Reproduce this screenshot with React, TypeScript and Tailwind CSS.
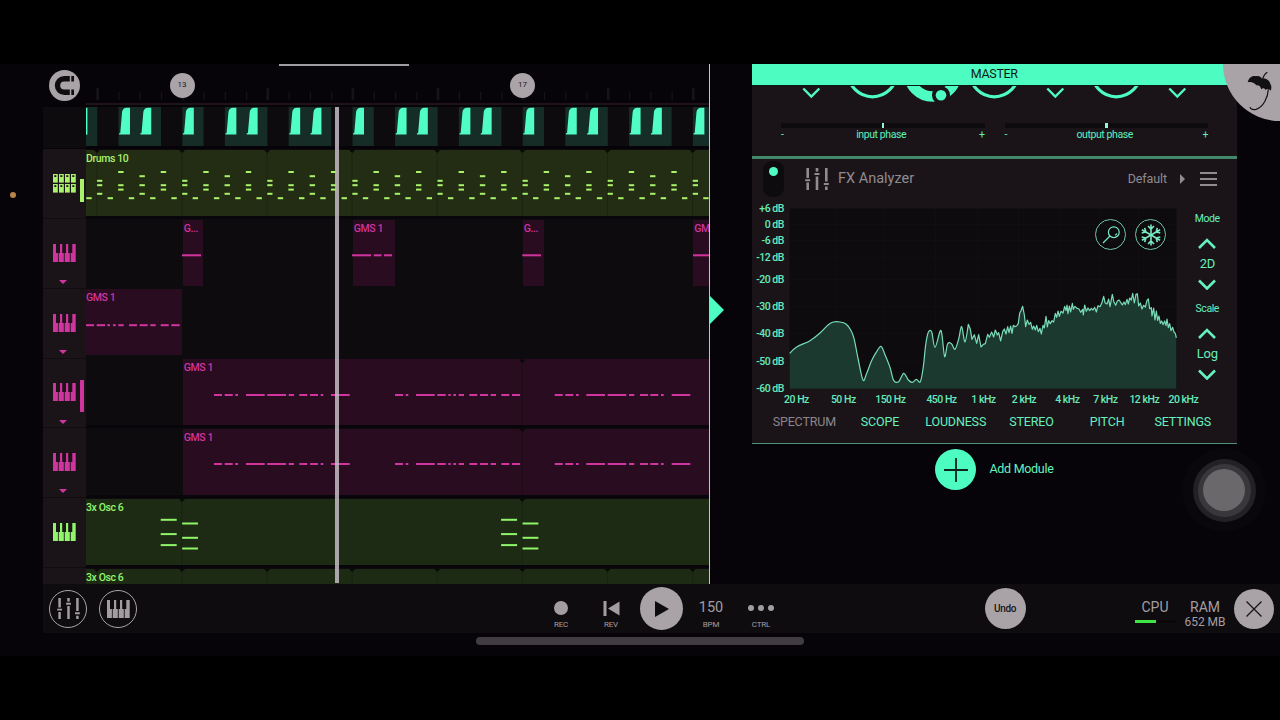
import type { ReactNode } from 'react';

type Note = [x: number, y: number, width: number];

type Clip = {
  left: number;
  width: number;
  label?: string;
};

type Track = {
  id: string;
  icon: 'pads' | 'keys';
  color: string;
  clipColor: string;
  clips: Clip[];
  notes: Note[];
  markers: number[];
  level?: { top: number; height: number };
  arrow?: boolean;
};

const BAR = 85.1;
const BEAT = BAR / 4;
const FIRST_BAR = 10.9;
const LANE_WIDTH = 623;

const PINK = '#d0359f';
const PINK_CLIP = '#290c20';

const bars = [0, 1, 2, 3, 4, 5, 6, 7].map((i) => FIRST_BAR + i * BAR);

// Drum pattern: one list of rows for every beat of the bar
const drumRows = [
  [31.8, 36.2, 44.8],
  [23, 36.2, 40.6],
  [27.2, 36.2, 44.8],
  [23, 36.2, 40.6],
];

const drumNotes: Note[] = [];
for (let i = 0; i < 30; i++) {
  const x = FIRST_BAR + i * BEAT;
  if (i < 29) drumRows[i % 4].forEach((y) => drumNotes.push([x, y, 5.4]));
  drumNotes.push([x - BEAT / 2, 49.2, 5.4]);
}

const line = (y: number, parts: [number, number][]): Note[] =>
  parts.map(([from, to]) => [from - 86, y, to - from]);

const melody = line(36, [
  [214, 222], [224.7, 232.7], [235.3, 238], [246, 264.7], [267.3, 286], [288.7, 294],
  [299.3, 307.3], [310, 318], [320.7, 323.3], [331, 349.7],
  [395, 403], [405.7, 408.3], [416, 434.7], [437.3, 445.7], [448.3, 450.7], [453.3, 456],
  [458.7, 464], [469.3, 477.3], [480, 488], [490.7, 496], [501.3, 509.3], [512, 520],
  [554.7, 562.7], [565.3, 573.3], [576, 578.7], [586.3, 605], [607.7, 626.3], [629, 634.3],
  [640, 648], [650.3, 658.3], [661, 663.7], [671.7, 690.3],
]);

const oscNotes: Note[] = [0, 4 * BAR].flatMap((o): Note[] => [
  [74.7 + o, 21.8, 16],
  [74.7 + o, 36.1, 16],
  [74.7 + o, 47.1, 16],
  [96 + o, 25.5, 16],
  [96 + o, 39.8, 16],
  [96 + o, 50.5, 16],
]);

const tracks: Track[] = [
  {
    id: 'drums', icon: 'pads', color: '#aaf269', clipColor: '#222d13',
    clips: [{ left: 0, width: LANE_WIDTH, label: 'Drums 10' }],
    notes: drumNotes, markers: bars, level: { top: 30, height: 23 },
  },
  {
    id: 'gms-a', icon: 'keys', color: PINK, clipColor: PINK_CLIP, arrow: true,
    clips: [
      { left: 96.5, width: 20.5, label: 'G...' },
      { left: 266.5, width: 42, label: 'GMS 1' },
      { left: 436.5, width: 21, label: 'G...' },
      { left: 607, width: 16, label: 'GM' },
    ],
    notes: line(36.3, [[182, 201], [352, 371], [373.7, 381.5], [384, 392], [522.3, 541], [693, 709]]),
    markers: [],
  },
  {
    id: 'gms-b', icon: 'keys', color: PINK, clipColor: PINK_CLIP, arrow: true,
    clips: [{ left: 0, width: 95.5, label: 'GMS 1' }],
    notes: line(36.2, [
      [86, 94], [96.7, 105], [107.3, 110], [113, 115.7], [118.3, 123.7],
      [129, 137], [139.7, 147.7], [150.3, 155.7], [160.7, 168.7], [171.3, 179.7],
    ]),
    markers: [],
  },
  {
    id: 'gms-c', icon: 'keys', color: PINK, clipColor: PINK_CLIP, arrow: true,
    clips: [{ left: 96.5, width: 526.5, label: 'GMS 1' }],
    notes: melody, markers: [436.4], level: { top: 21.4, height: 32 },
  },
  {
    id: 'gms-d', icon: 'keys', color: PINK, clipColor: PINK_CLIP, arrow: true,
    clips: [{ left: 96.5, width: 526.5, label: 'GMS 1' }],
    notes: melody, markers: [436.4],
  },
  {
    id: 'osc-a', icon: 'keys', color: '#90f56b', clipColor: '#1d2b14',
    clips: [{ left: 0, width: LANE_WIDTH, label: '3x Osc 6' }],
    notes: oscNotes, markers: [96, 436.4],
  },
  {
    id: 'osc-b', icon: 'keys', color: '#90f56b', clipColor: '#1d2b14',
    clips: [{ left: 0, width: LANE_WIDTH, label: '3x Osc 6' }],
    notes: [], markers: bars,
  },
];

const KeysIcon = ({ className }: { className?: string }) => (
  <svg width="23" height="18" viewBox="0 0 23 18" fill="currentColor" className={className}>
    <path d="M0 0h3v9h1.900v9H0zM7 0h2.200v9h1.600v9H5.700V9H7zM13 0h2.200v9h1.600v9h-5.100V9H13zM19.300 0h3.400v18h-5V9h1.600z" />
  </svg>
);

const PadsIcon = () => (
  <svg width="23" height="19" viewBox="0 0 23 19" fill="currentColor">
    {[0, 10].map((y) =>
      [0, 6, 12, 18].map((x) => (
        <g key={`${x}-${y}`}>
          <rect x={x} y={y} width="4.8" height="8.6" />
          <rect x={x + 1.3} y={y + 1.2} width="2" height="1.800" fill="#1a1316" />
        </g>
      )),
    )}
  </svg>
);

const MixerIcon = ({ size }: { size: number }) => (
  <svg width={size} height={size} viewBox="0 0 24 24" fill="currentColor">
    <path d="M1.4 1h2.6v10H1.4zM.2 12.2h5v2h-5zM1.4 15.6h2.6V23H1.4zM10.700 1h2.600v3.600h-2.600zM9.500 6h5v2h-5zM10.700 9.400h2.600V23h-2.600zM20 1h2.600v13.500H20zM18.800 16h5v2h-5zM20 19.500h2.600V23H20z" />
  </svg>
);

const Chevron = ({ up = false }: { up?: boolean }) => (
  <svg width="18" height="11" viewBox="0 0 18 11" fill="none" stroke="currentColor" strokeWidth="2.6">
    <path d={up ? 'M1 10l8-8 8 8' : 'M1 1.500l8 8 8-8'} />
  </svg>
);

const Ruler = () => (
  <div className="relative h-[42px]">
    <svg width="667" height="42" className="block" fill="#171418">
      {bars.map((x) => (
        <rect key={x} x={x + 42.4} y="24" width="2.6" height="12" />
      ))}
      {Array.from({ length: 29 }, (_, i) => (
        <rect key={i} x={54.1 + i * BEAT} y="28" width="1.200" height="8" />
      ))}
      <rect x="43" y="39" width="624" height="2" fill="#1d1319" />
    </svg>
    <div className="absolute left-[6px] top-[5.500px] flex size-[31px] items-center justify-center rounded-full bg-[#a9a3a8]">
      <svg width="21" height="21" viewBox="0 0 21 21" fill="none" stroke="#100d10" strokeWidth="5.400">
        <path d="M15.800 3.700H10.300a6.800 6.800 0 0 0 0 13.600h5.500" />
        <path d="M17.300 3.700h2.700M17.300 17.300h2.700" />
      </svg>
    </div>
    <div className="absolute left-[126.500px] top-[9px] flex size-[25px] items-center justify-center rounded-full bg-[#aaa4a9] pb-px text-[8px] text-[#1a171a]">13</div>
    <div className="absolute left-[467px] top-[9px] flex size-[25px] items-center justify-center rounded-full bg-[#aaa4a9] pb-px text-[8px] text-[#1a171a]">17</div>
    <div className="absolute left-[236px] top-0 h-[2px] w-[130px] bg-[#a09da1]" />
  </div>
);

const hits = [-4, -3, -2, -1, 0, 1, 2, 3].flatMap((i) => {
  const x = 96.300 + (i * BAR * 2);
  return [
    { x, width: BEAT, waves: [0] },
    { x: x + BEAT * 2, width: BEAT * 2, waves: [0, BEAT] },
    { x: x + BEAT * 5, width: BEAT * 2, waves: [0, BEAT] },
  ];
});

const AudioTrack = () => (
  <div className="flex h-[43.200px] pt-px">
    <div className="h-[41px] w-[43px] bg-[#0d0b0e]" />
    <svg width="623" height="39" className="bg-[#0e0b0e]">
      {hits.map((hit) => (
        <g key={hit.x}>
          <rect x={hit.x} y="0" width={hit.width} height="39" fill="#162d27" />
          {hit.waves.map((w) => (
            <path
              key={w}
              transform={`translate(${hit.x + w} 0)`}
              d="M.600 27.400v-1.200l1.200-.300L3.600 5C4 2.200 5.500 1 8 .800h3.500v26.600z"
              fill="#50fdc3"
            />
          ))}
        </g>
      ))}
      <rect x="0" y="1" width="1" height="26.400" fill="#50fdc3" />
    </svg>
  </div>
);

const TrackRow = ({ track }: { track: Track }) => (
  <div className="flex h-[69.800px] shrink-0 overflow-hidden">
    <div
      className="relative flex h-full w-[43px] shrink-0 items-center justify-center border-b border-[#100c0f] bg-[#1a1418] pr-px"
      style={{ color: track.color }}
    >
      {track.icon === 'pads' ? <PadsIcon /> : <KeysIcon className="-mt-px" />}
      {track.arrow && (
        <svg width="8" height="4" className="absolute left-[16px] top-[61px]" fill="currentColor">
          <path d="M0 0h8L4 4z" />
        </svg>
      )}
      {track.level && (
        <div
          className="absolute right-[2px] w-1 bg-current"
          style={{ top: track.level.top, height: track.level.height }}
        />
      )}
    </div>
    <div className="relative h-full w-[623px] overflow-hidden bg-[#0d0b0e]">
      {track.clips.map((clip) => (
        <div
          key={clip.left}
          className="absolute top-[.6px] h-[66px] overflow-hidden whitespace-nowrap text-[10.500px] font-medium leading-[17px] tracking-[-.4px]"
          style={{
            left: clip.left,
            width: clip.width,
            color: track.color,
            background: track.clipColor,
            paddingLeft: clip.left ? 1.2 : 0,
          }}
        >
          {clip.label}
        </div>
      ))}
      <svg width="623" height="67" className="absolute left-0 top-0">
        <g fill={track.color}>
          {track.notes.map(([x, y, width], i) => (
            <rect key={i} x={x} y={y - 1} width={width} height="2" />
          ))}
        </g>
        {track.markers.map((x) => (
          <g key={x} fill="#0a0a08">
            <path d={`M${x - 3.500} .600h7L${x} 4z`} />
            <rect x={x - 0.500} y="0" width="1" height="67" opacity=".25" />
          </g>
        ))}
      </svg>
      {track.clips.some((clip) => clip.width > 500) && (
        <div className="absolute bottom-0 h-[3.200px] w-full bg-[#08060a]" />
      )}
    </div>
  </div>
);

const Playlist = () => (
  <div className="relative flex h-full w-[668px] shrink-0">
    <div className="h-full w-[666px] overflow-hidden">
      <Ruler />
      <AudioTrack />
      {tracks.map((track) => (
        <TrackRow key={track.id} track={track} />
      ))}
    </div>
    <div className="h-full w-px bg-[#6ff0c0]" />
    <div className="absolute left-[292px] top-[43px] h-[476px] w-[4px] bg-[#c4bcc4]/85" />
    <svg width="15" height="28" className="absolute -right-[14px] top-[232px]" fill="#4dfcc0">
      <path d="M0 0l14 14L0 28z" />
    </svg>
  </div>
);

const Knob = ({ x }: { x: number }) => (
  <circle cx={x} cy="-13.500" r="24.300" fill="none" stroke="#4dfcc0" strokeWidth="3.200" />
);

const Knobs = () => (
  <svg width="486" height="36" className="block" fill="none" stroke="#4dfcc0">
    {[59.3, 303.3, 425.3].map((x) => (
      <path key={x} d={`M${x - 8} 2.500l8 8 8-8`} strokeWidth="2.400" />
    ))}
    <Knob x={120.5} />
    <Knob x={242.3} />
    <Knob x={364.3} />
    <circle cx="180.700" cy="-13.500" r="24" strokeWidth="10.500" />
    <circle cx="189" cy="9.200" r="9" fill="#1a1418" stroke="none" />
    <circle cx="189" cy="9.200" r="5.300" fill="#4dfcc0" stroke="none" />
  </svg>
);

const PhaseSlider = ({ label }: { label: string }) => (
  <div className="w-[203.500px] text-[#5cf0be]">
    <div className="flex h-[5px] justify-center bg-[#0e0b0e]">
      <div className="h-full w-[2.500px] bg-[#8ff5d2]" />
    </div>
    <div className="flex justify-between text-[10.500px] leading-[13px] tracking-[-.4px]">
      <span>-</span>
      <span>{label}</span>
      <span>+</span>
    </div>
  </div>
);

const dbLabels: [string, number][] = [
  ['+6 dB', 208.5], ['0 dB', 224.5], ['-6 dB', 240.7], ['-12 dB', 257.4], ['-20 dB', 278.8],
  ['-30 dB', 306.5], ['-40 dB', 333.6], ['-50 dB', 360.9], ['-60 dB', 388.5],
];

const hzLabels: [string, number][] = [
  ['20 Hz', 796.5], ['50 Hz', 843.3], ['150 Hz', 890.3], ['450 Hz', 941.5], ['1 kHz', 983.5],
  ['2 kHz', 1024], ['4 kHz', 1067.3], ['7 kHz', 1105.3], ['12 kHz', 1144.3], ['20 kHz', 1183.4],
];

// Low end is drawn as a smooth curve, the rest as plain segments
const lowBand: [number, number][] = [
  [119, 460], [140, 441], [180, 422], [210, 399], [235, 374], [250, 366], [270, 366], [288, 372],
  [302, 390], [312, 415], [325, 480], [339, 540], [349, 523], [364, 484], [378, 458], [393, 439],
  [405, 464], [420, 502], [431, 541], [446, 545], [461, 520], [475, 540], [487, 547], [499, 538],
  [511, 545], [520, 500], [527, 435], [535, 397], [545, 396], [555, 442], [570, 394], [576, 405],
  [584, 470], [593, 431], [605, 432], [615, 448], [626, 417], [635, 380], [645, 426], [655, 373],
];

const highBand: [number, number][] = [
  [661, 388], [666, 418], [673, 404], [680, 430], [686, 404], [693, 441], [700, 433], [706, 431],
  [713, 403], [718, 412], [725, 396], [731, 411], [736, 390], [742, 405], [746, 398],
  ...([
    [32, 423], [38, 395], [43, 387],
    [48, 402], [53, 380], [57, 398], [62, 378], [66, 400], [70, 376], [75, 380], [80, 378], [85, 370],
    [89, 340], [93, 332], [98, 319], [103, 345], [107, 380], [112, 360], [117, 373], [122, 367],
    [127, 388], [131, 378], [136, 390], [140, 376], [145, 395], [150, 385], [154, 402], [159, 376],
    [163, 384], [168, 349], [172, 381], [176, 362], [181, 371], [186, 362], [191, 366], [196, 340],
    [200, 352], [204, 333], [208, 349], [213, 334], [219, 339], [224, 319], [228, 332], [231, 315],
    [234, 341], [238, 318], [242, 336], [247, 310], [250, 328], [255, 319], [261, 325], [267, 327],
    [272, 337], [278, 328], [280, 345], [284, 315], [289, 334], [294, 324], [299, 332], [304, 325],
    [309, 330], [314, 322], [319, 336], [324, 317], [330, 320], [335, 310], [341, 289], [345, 308],
    [351, 312], [356, 297], [360, 320], [367, 283], [372, 307], [377, 316], [382, 303], [387, 300],
    [392, 307], [397, 315], [402, 306], [406, 314], [411, 298], [415, 312], [419, 294], [424, 300],
    [428, 280], [433, 309], [438, 283], [442, 281], [446, 318], [451, 309], [456, 327], [461, 316],
    [466, 321], [471, 301], [475, 297], [479, 326], [484, 323], [486, 348], [491, 324], [495, 360],
    [499, 333], [503, 361], [507, 348], [511, 370], [515, 363], [519, 374], [524, 363], [528, 377],
    [531, 357], [535, 383], [539, 371], [543, 392], [548, 382], [552, 396], [556, 400], [559, 414],
  ] as [number, number][]).map(([x, y]): [number, number] => [x + 720, y]),
];

const smooth = (points: [number, number][]) =>
  points.slice(1).reduce((d, [x, y], i) => {
    const [px, py] = points[Math.max(i - 1, 0)];
    const [ax, ay] = points[i];
    const [nx, ny] = points[Math.min(i + 2, points.length - 1)];
    return `${d}C${ax + (x - px) / 6} ${ay + (y - py) / 6} ${x - (nx - ax) / 6} ${y - (ny - ay) / 6} ${x} ${y}`;
  }, `M${points[0][0]} ${points[0][1]}`);

const curve = smooth(lowBand) + highBand.map(([x, y]) => `L${x} ${y}`).join('');

const Spectrum = () => (
  <div className="relative">
    <svg
      width="425"
      height="204"
      viewBox="752 204 425 204"
      className="block overflow-visible text-[10.500px] font-medium tracking-[-.5px]"
      fill="#66eabb"
    >
      <rect x="789.500" y="208.500" width="387" height="180.500" rx="1" fill="#0d0b0e" />
      <g fill="#110e12">
        {[836, 884, 935, 977, 1018, 1060, 1099, 1138].map((x) => (
          <rect key={x} x={x} y="209" width="1" height="179" />
        ))}
        {[224, 240, 257, 279, 306, 333, 361].map((y) => (
          <rect key={y} x="790" y={y} width="386" height="1" />
        ))}
      </g>
      <g transform="translate(750 200) scale(.33333)">
        <path d={`${curve}V566H119z`} fill="#1b392e" />
        <path d={curve} fill="none" stroke="#79dcb8" strokeWidth="3.600" strokeLinejoin="round" />
      </g>
      {dbLabels.map(([label, y]) => (
        <text key={label} x="783.800" y={y + 3.700} textAnchor="end">{label}</text>
      ))}
      {hzLabels.map(([label, x]) => (
        <text key={label} x={x} y="403" textAnchor="middle">{label}</text>
      ))}
    </svg>
    <div className="absolute right-[10.500px] top-[15px] flex gap-[9px] text-[#7ae8c0]">
      <div className="flex size-[31px] items-center justify-center rounded-full border border-[#6fc4a6]">
        <svg width="18" height="18" viewBox="0 0 18 18" fill="none" stroke="currentColor" strokeWidth="1.200">
          <circle cx="11.800" cy="6.200" r="5.400" />
          <path d="M8 10L1 17M14.800 7.500a3.500 3.500 0 0 1-1.800 1.800" />
        </svg>
      </div>
      <div className="flex size-[31px] items-center justify-center rounded-full border border-[#6fc4a6]">
        <svg width="22" height="22" viewBox="-11 -11 22 22" fill="none" stroke="currentColor" strokeWidth="1.600">
          {[0, 60, 120, 180, 240, 300].map((a) => (
            <path key={a} transform={`rotate(${a})`} d="M0 0V-10.500M-3 -9L0 -6L3 -9" />
          ))}
        </svg>
      </div>
    </div>
  </div>
);

const Selector = ({ title, value }: { title: string; value: string }) => (
  <div className="flex h-[90px] flex-col items-center">
    <span className="text-[10.500px] leading-[13px] tracking-[-.4px]">{title}</span>
    <span className="mt-[13px]"><Chevron up /></span>
    <span className="mt-[7px] text-[13px] leading-4 tracking-[-.3px]">{value}</span>
    <span className="mt-[7px]"><Chevron /></span>
  </div>
);

const tabs = ['SPECTRUM', 'SCOPE', 'LOUDNESS', 'STEREO', 'PITCH', 'SETTINGS'];

const Analyzer = () => (
  <div className="h-[285px] border-b border-[#4d9176] bg-[#1a1418] text-[#66f0be]">
    <div className="flex h-[45px] items-start pl-[11.500px] text-[#918b91]">
      <div className="mt-[1.500px] flex h-[36px] w-[21px] justify-center rounded-[9px] bg-[#0d0b0e] pt-[6px]">
        <div className="size-[9px] rounded-full bg-[#50fcc3]" />
      </div>
      <div className="ml-[20.500px] mt-[8px]"><MixerIcon size={24} /></div>
      <span className="ml-[9.500px] mt-[10.500px] text-[14.500px] leading-[18px]">FX Analyzer</span>
      <span className="ml-auto mt-[10.500px] text-[12.500px] leading-[18px] tracking-[-.1px]">Default</span>
      <svg width="5" height="10" className="ml-[12.500px] mt-[15px]" fill="currentColor">
        <path d="M0 0l5 5-5 5z" />
      </svg>
      <div className="ml-[15px] mr-[20.500px] mt-[13px] flex w-[17px] flex-col gap-[4px]">
        <div className="h-[2px] bg-current" />
        <div className="h-[2px] bg-current" />
        <div className="h-[2px] bg-current" />
      </div>
    </div>
    <div className="flex">
      <Spectrum />
      <div className="w-[61px] pl-px pt-[8px]">
        <Selector title="Mode" value="2D" />
        <Selector title="Scale" value="Log" />
      </div>
    </div>
    <div className="mx-[15px] mt-[6px] flex text-[12.500px] leading-[16px] tracking-[-.15px]">
      {tabs.map((tab, i) => (
        <span key={tab} className={`flex w-[75.700px] justify-center ${i === 0 ? 'text-[#8d868c]' : ''}`}>
          {tab}
        </span>
      ))}
    </div>
  </div>
);

const Rack = () => (
  <div className="ml-[40.500px] w-[485.500px] shrink-0">
    <div className="h-[22px] border-b border-[#0b1a15] bg-[#4dfcc0] text-center text-[12.500px] leading-[19px] tracking-[-.3px] text-[#101c18]">
      MASTER
    </div>
    <div className="h-[70px] bg-[#1a1418]">
      <Knobs />
      <div className="flex justify-between pl-[29.500px] pr-[29px] pt-[1px]">
        <PhaseSlider label="input phase" />
        <PhaseSlider label="output phase" />
      </div>
    </div>
    <div className="h-[3px] bg-[#43886a]" />
    <Analyzer />
    <div className="flex items-center pl-[183.500px] pt-[5px] text-[#66f0be]">
      <div className="flex size-[41px] items-center justify-center rounded-full bg-[#4dfcc0]">
        <svg width="24" height="24" stroke="#10231c" strokeWidth="1.800">
          <path d="M12 0v24M0 12h24" />
        </svg>
      </div>
      <span className="ml-[13.500px] text-[12.500px] tracking-[-.3px]">Add Module</span>
    </div>
  </div>
);

const TransportItem = ({ label, children }: { label: string; children: ReactNode }) => (
  <div className="flex w-[50px] flex-col items-center pt-[8px] text-[8px] leading-[10px]">
    <div className="flex h-[26px] items-center">{children}</div>
    <span className="-mt-px tracking-[-.2px]">{label}</span>
  </div>
);

const Footer = () => (
  <div className="ml-[43px] h-[72px] text-[#a39da2]">
    <div className="flex h-[49px] items-center bg-[#0f0c0f]">
      <div className="ml-[6px] flex size-[38px] items-center justify-center rounded-full border border-[#aaa4a9]">
        <MixerIcon size={23} />
      </div>
      <div className="ml-[12px] flex size-[38px] items-center justify-center rounded-full border border-[#aaa4a9]">
        <KeysIcon />
      </div>
      <div className="ml-[399px] flex items-center">
        <TransportItem label="REC">
          <div className="size-[14px] rounded-full bg-current" />
        </TransportItem>
        <TransportItem label="REV">
          <svg width="17" height="15" fill="currentColor">
            <path d="M.500 0h3v15h-3zM16.500 .500v14L5 7.500z" />
          </svg>
        </TransportItem>
        <div className="mx-[3.500px] flex size-[43px] items-center justify-center rounded-full bg-[#a9a3a8]">
          <svg width="14" height="16" fill="#0f0c0f" className="ml-0.5">
            <path d="M0 0l14 8-14 8z" />
          </svg>
        </div>
        <TransportItem label="BPM">
          <span className="text-[14.500px] leading-[16px]">150</span>
        </TransportItem>
        <TransportItem label="CTRL">
          <div className="flex gap-[3.500px]">
            <div className="size-[6.500px] rounded-full bg-current" />
            <div className="size-[6.500px] rounded-full bg-current" />
            <div className="size-[6.500px] rounded-full bg-current" />
          </div>
        </TransportItem>
      </div>
      <div className="ml-[198.500px] flex size-[41px] items-center justify-center rounded-full bg-[#a9a3a8] pb-px text-[10px] font-medium tracking-[-.3px] text-[#171417]">
        Undo
      </div>
      <div className="ml-[109px] mt-[15px] h-[38px] w-[41px]">
        <div className="pt-[2px] text-center text-[14px] leading-[16px]">CPU</div>
        <div className="mt-[5px] h-[3px] bg-[#0a080b]">
          <div className="h-full w-[21.500px] bg-[#3fe344]" />
        </div>
      </div>
      <div className="ml-[6.500px] mt-[15px] h-[38px] w-[46px] text-center">
        <div className="pt-[2px] text-[14px] leading-[16px]">RAM</div>
        <div className="text-[12px] leading-[14px]">652 MB</div>
      </div>
      <div className="ml-[6px] flex size-[40px] items-center justify-center rounded-full bg-[#a9a3a8]">
        <svg width="16" height="16" stroke="#171417" strokeWidth="1.300">
          <path d="M.500 .500l15 15M15.500 .500l-15 15" />
        </svg>
      </div>
    </div>
    <div className="ml-[433px] mt-[4px] h-[7.500px] w-[328px] rounded-full bg-[#403c41]" />
  </div>
);

const App = () => {
  return (
    <div className="h-[720px] w-[1280px] overflow-hidden bg-black py-16 font-['Roboto',sans-serif]">
      <div className="relative h-[592px] overflow-hidden bg-[#060408]">
        <div className="flex h-[520px]">
          <div className="w-[43px] shrink-0 pl-[9.500px] pt-[128px]">
            <div className="size-[6px] rounded-full bg-[#b98247]" />
          </div>
          <Playlist />
          <Rack />
        </div>
        <Footer />

        {/* plugin shortcut in the corner */}
        <div className="absolute -right-[57px] -top-[57px] size-[114px] rounded-full bg-[#a9a3a8]" />
        <svg width="25" height="40" viewBox="741 33 75 120" className="absolute right-[8px] top-[7px]" fill="#121012">
          <path d="M743 67C746 54 756 46 768 49C776 46 782 50 786 56C798 53 810 62 811 72C815 77 815 84 812 92C807 85 800 86 797 90C793 83 788 84 784 88C782 79 776 74 769 76C762 67 752 65 743 67z" />
          <path d="M802 37C796 40 791 48 788 57M805 88C804 112 790 142 768 148C758 150 750 147 750 141" fill="none" stroke="#121012" strokeWidth="3.500" />
        </svg>

        {/* assistive touch button */}
        <div className="absolute right-[14px] top-[384px] flex size-[84px] items-center justify-center rounded-full bg-[#09070b]">
          <div className="flex size-[63px] items-center justify-center rounded-full bg-[#232125]">
            <div className="flex size-[53px] items-center justify-center rounded-full bg-[#39373b]">
              <div className="size-[42px] rounded-full bg-[#6a686b]" />
            </div>
          </div>
        </div>
      </div>
    </div>
  );
};

export default App;
